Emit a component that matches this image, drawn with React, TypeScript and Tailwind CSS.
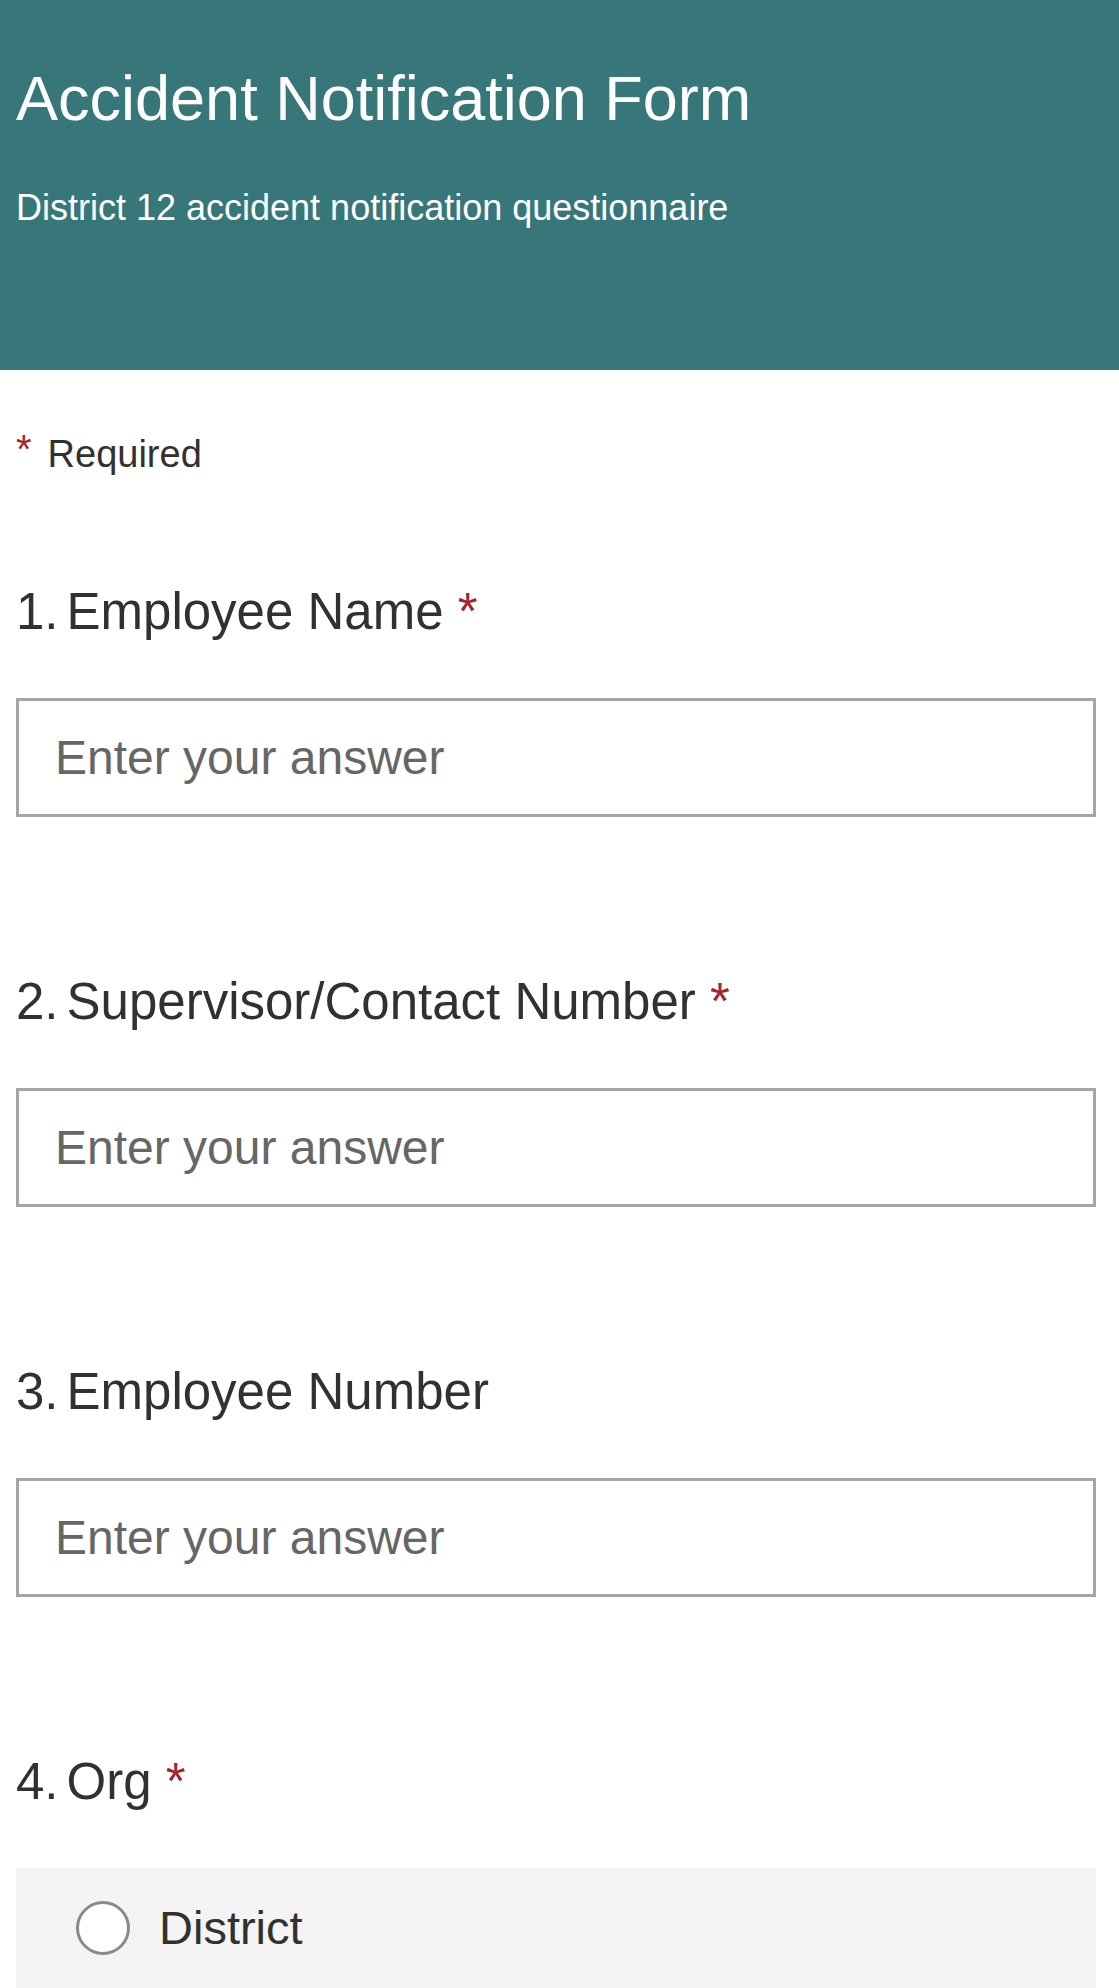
import React from 'react';

const questions = [
  { num: '1.', label: 'Employee Name', required: true },
  { num: '2.', label: 'Supervisor/Contact Number', required: true },
  { num: '3.', label: 'Employee Number', required: false },
];

const QuestionTitle: React.FC<{ num: string; label: string; required: boolean }> = ({ num, label, required }) => (
  <div className="text-[51px] leading-none text-[#323130]">
    <span className="mr-[8px]">{num}</span>
    <span>{label}</span>
    {required && <span className="text-[#a4262c]"> *</span>}
  </div>
);

export default function App() {
  return (
    <div className="min-h-screen bg-white font-['Liberation_Sans',Arial,sans-serif]">
      <header className="h-[370px] bg-[#377779] px-4 pt-[67px] text-white">
        <h1 className="text-[63px] leading-none">Accident Notification Form</h1>
        <p className="mt-[60px] text-[36px] leading-none">District 12 accident notification questionnaire</p>
      </header>

      <main className="pl-4 pr-[23px]">
        <div className="mt-[59px] text-[38px] leading-none text-[#323130]">
          <span className="align-[4px] text-[40px] text-[#a4262c]">*</span>
          <span className="ml-[16px]">Required</span>
        </div>

        {questions.map((q, i) => (
          <div key={q.num} className={i === 0 ? 'mt-[113px]' : 'mt-[159px]'}>
            <QuestionTitle num={q.num} label={q.label} required={q.required} />
            <input
              type="text"
              placeholder="Enter your answer"
              className="mt-[61px] block h-[119px] w-full border-[3px] border-[#a6a6a6] bg-white pl-[36px] text-[48px] text-[#323130] outline-none placeholder:text-[#666666]"
            />
          </div>
        ))}

        <div className="mt-[159px]">
          <QuestionTitle num="4." label="Org" required />
          <div className="mt-[61px] bg-[#f4f4f4]">
            <label className="flex h-[120px] items-center gap-[29px] pl-[60px]">
              <input
                type="radio"
                name="org"
                className="h-[54px] w-[54px] shrink-0 appearance-none rounded-full border-[3px] border-[#8a8a8a] bg-white"
              />
              <span className="text-[47px] text-[#323130]">District</span>
            </label>
          </div>
        </div>
      </main>
    </div>
  );
}
